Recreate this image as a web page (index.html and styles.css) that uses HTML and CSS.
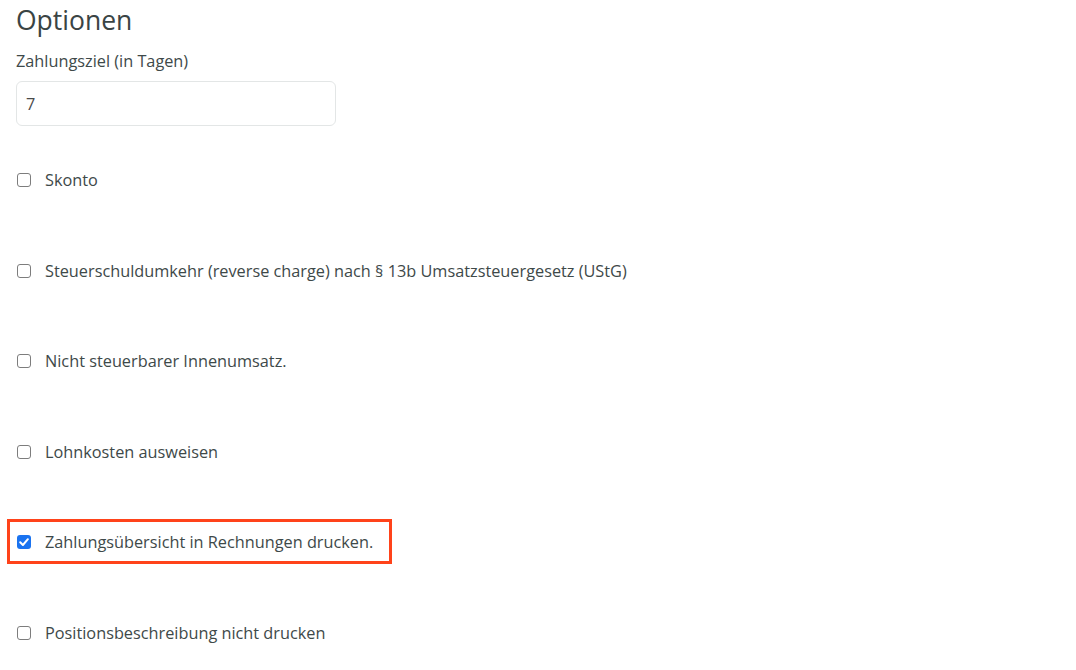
FILE: index.html
```html
<!DOCTYPE html>
<html lang="de">
<head>
<meta charset="utf-8">
<title>Optionen</title>
<link rel="stylesheet" href="styles.css">
</head>
<body>
<main class="page">
  <h2 class="title">Optionen</h2>
  <div class="field">
    <label class="field-label" for="ziel">Zahlungsziel (in Tagen)</label>
    <input class="field-input" id="ziel" type="text" value="7">
  </div>
  <div class="checks">
    <label class="check"><input type="checkbox"><span>Skonto</span></label>
    <label class="check"><input type="checkbox"><span>Steuerschuldumkehr (reverse charge) nach § 13b Umsatzsteuergesetz (UStG)</span></label>
    <label class="check"><input type="checkbox"><span>Nicht steuerbarer Innenumsatz.</span></label>
    <label class="check"><input type="checkbox"><span>Lohnkosten ausweisen</span></label>
    <label class="check check-highlight"><input type="checkbox" checked><span>Zahlungsübersicht in Rechnungen drucken.</span></label>
    <label class="check"><input type="checkbox"><span>Positionsbeschreibung nicht drucken</span></label>
  </div>
</main>
</body>
</html>
```

FILE: styles.css
```css
html, body {
  margin: 0;
  padding: 0;
  background: #ffffff;
}
body {
  font-family: "Open Sans", "Noto Sans", sans-serif;
  color: #3e4949;
}
.page {
  padding: 4px 16px 0 16px;
}
.title {
  margin: 0;
  font-size: 26.5px;
  font-weight: 400;
  line-height: 32px;
  color: #3a4444;
}
.field {
  display: flex;
  flex-direction: column;
  margin-top: 14px;
}
.field-label {
  font-size: 16.3px;
  line-height: 22px;
  margin-bottom: 9px;
}
.field-input {
  box-sizing: border-box;
  width: 320px;
  height: 45px;
  border: 1px solid #e3e6e6;
  border-radius: 6px;
  padding: 0 9px;
  font-family: inherit;
  font-size: 16.3px;
  color: #4a4a4a;
  outline: none;
}
.checks {
  display: flex;
  flex-direction: column;
  gap: 66.5px;
  margin-top: 42px;
}
.check {
  position: relative;
  display: flex;
  align-items: center;
  height: 24px;
  font-size: 16.3px;
}
.check input {
  -webkit-appearance: none;
  appearance: none;
  box-sizing: border-box;
  width: 14px;
  height: 14px;
  margin: 0 14px 0 1px;
  border: 1.5px solid #7d7d7d;
  border-radius: 3px;
  background: #ffffff;
  flex: none;
}
.check input:checked {
  border: none;
  background-color: #1a73f0;
  background-image: url("data:image/svg+xml;utf8,<svg xmlns='http://www.w3.org/2000/svg' viewBox='0 0 14 14'><path d='M3.2 7.3 L5.9 10 L10.9 4.2' fill='none' stroke='white' stroke-width='2' stroke-linecap='round' stroke-linejoin='round'/></svg>");
  background-size: 14px 14px;
}
.check-highlight::before {
  content: "";
  position: absolute;
  left: -9px;
  top: -11px;
  width: 385px;
  height: 45px;
  box-sizing: border-box;
  border: 3px solid #ff431a;
}
```
